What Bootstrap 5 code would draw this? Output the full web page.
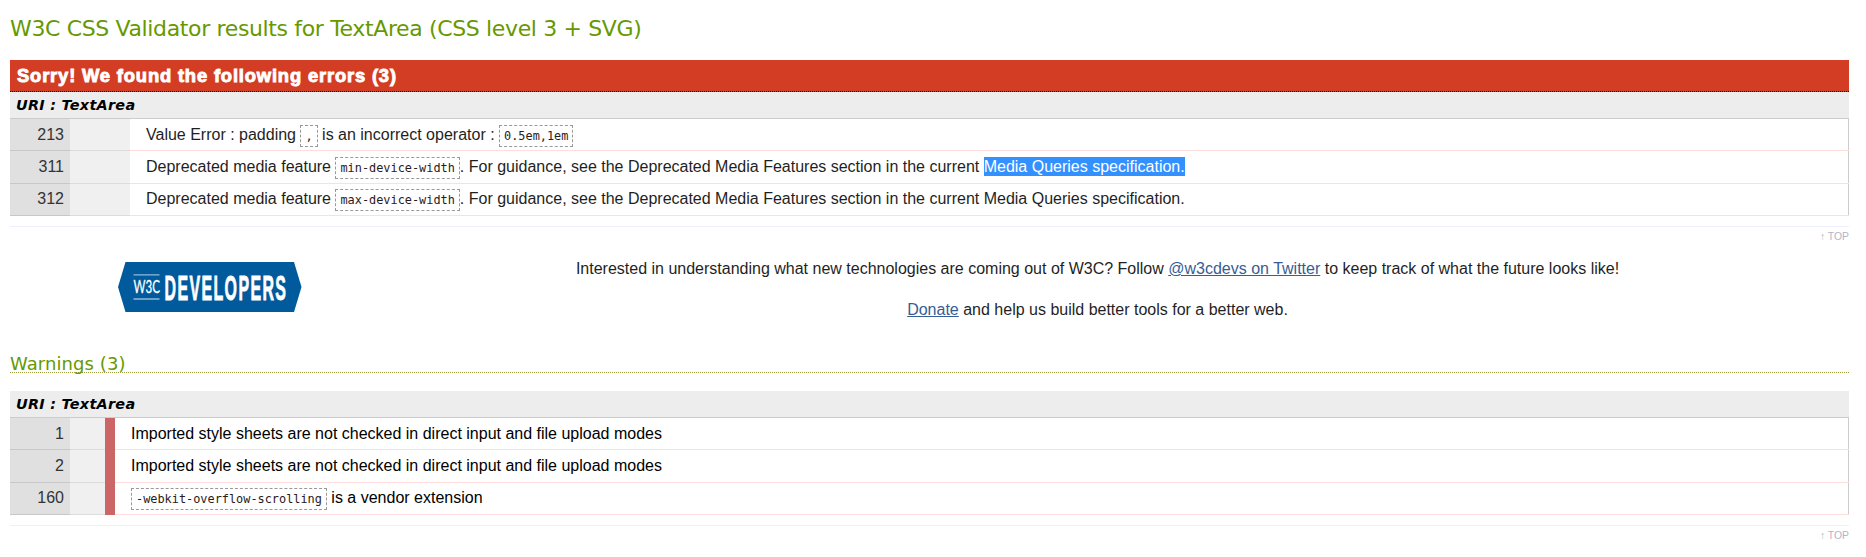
<!DOCTYPE html>
<html lang="en">
<head>
<meta charset="utf-8">
<title>W3C CSS Validator results for TextArea (CSS level 3 + SVG)</title>
<link href="https://cdn.jsdelivr.net/npm/bootstrap@5.3.0/dist/css/bootstrap.min.css" rel="stylesheet">
<style>
body{font:16px/20px "Liberation Sans",Arial,sans-serif;color:#1f1f1f;background:#fff;padding:0 17px 0 10px;overflow:hidden}
h2,h3,h4{font-family:"DejaVu Sans",Verdana,sans-serif;font-weight:400}
.page-title{font-size:22px;line-height:26px;color:#690;padding-top:16px;height:60px;letter-spacing:-.36px}
.err-title{font:bold 18.4px/31px "Liberation Sans",Arial,sans-serif;height:32px;background:#d23d24;color:#fff;padding-left:7px;border-bottom:1px dotted #000;-webkit-text-stroke:.9px #fff;letter-spacing:.82px}
.uri{font:italic bold 14.4px/26px "DejaVu Sans",Verdana,sans-serif;letter-spacing:.28px;background:#ededed;color:#000;height:26px;padding-left:6px}
.results{border-top:1px solid #ccc;border-right:1px solid #ccc}
.entry{height:32.33px;line-height:31px}
.entry:last-child{line-height:29.6px}
.num{width:60px;background:#e0e0e0;border-bottom:1px solid #c8c8c8;padding-right:6px;color:#333}
.lvl{width:60px;background:#f0f0f0;border-bottom:1px solid #ddd}
.msg{border-bottom:1px solid #fdd;padding-left:16px;margin-right:-1px;white-space:pre}
.lvl-warn{width:45px;border-right:10px solid #cc6666;border-bottom:0;box-shadow:inset 0 -1px #ddd}
.warn .msg{color:#000}
code{font:11.88px/20px "DejaVu Sans Mono",monospace;color:#2a1a1a;border:1px dashed #999;padding:3px 4px;background:#fff}
.sel{background:#3390ff;color:#fff;padding:1px 0}
.totop{border-top:1px solid #eef;font-size:10.4px;line-height:20px;color:#b4b4c8;height:21px;margin-top:10px}
.promo{height:108px}
.logo-col{width:336px;padding:15px 0 0 108px}
.promo a{color:#365d95}
.promo-lead{margin:12px 0 21px}
.warn-title{font-size:18px;line-height:18px;color:#690;height:18px;border-bottom:1px dotted #9b9b3f;margin:0 0 18px;letter-spacing:.08px}
</style>
</head>
<body>
<h2 class="page-title m-0">W3C CSS Validator results for TextArea (CSS level 3 + SVG)</h2>
<section>
<h3 class="err-title m-0">Sorry! We found the following errors (3)</h3>
<h4 class="uri m-0">URI : TextArea</h4>
<div class="results">
<div class="entry d-flex"><div class="num text-end">213</div><div class="lvl"></div><div class="msg flex-fill">Value Error : padding <code>,</code> is an incorrect operator : <code>0.5em,1em</code></div></div>
<div class="entry d-flex"><div class="num text-end">311</div><div class="lvl"></div><div class="msg flex-fill">Deprecated media feature <code>min-device-width</code>. For guidance, see the Deprecated Media Features section in the current <span class="sel">Media Queries specification.</span></div></div>
<div class="entry d-flex"><div class="num text-end">312</div><div class="lvl"></div><div class="msg flex-fill">Deprecated media feature <code>max-device-width</code>. For guidance, see the Deprecated Media Features section in the current Media Queries specification.</div></div>
</div>
<div class="totop text-end">↑ TOP</div>
</section>
<section class="promo d-flex">
<div class="logo-col">
<svg class="d-block" width="184" height="50" viewBox="0 0 184 50"><path d="M7.500 0H176L183.500 25 176 50H7.500L0 25Z" fill="#005a9c"/><path d="M15.500 12.800H41.500M15.500 37H41.500" stroke="#8fb9da" stroke-width="1.300"/><text transform="translate(15.500 31) scale(.66 1)" font-family="Lato, sans-serif" font-size="17.500" fill="#fff" stroke="#fff" stroke-width=".3">W3C</text><text transform="translate(46.500 37.500) scale(.455 1)" font-family="Liberation Sans, sans-serif" font-weight="700" font-size="35" fill="#fff" stroke="#fff" stroke-width=".9" textLength="267">DEVELOPERS</text></svg>
</div>
<div class="flex-fill text-center">
<p class="promo-lead">Interested in understanding what new technologies are coming out of W3C? Follow <a href="#">@w3cdevs on Twitter</a> to keep track of what the future looks like!</p>
<p class="m-0"><a href="#">Donate</a> and help us build better tools for a better web.</p>
</div>
</section>
<section class="warn">
<h3 class="warn-title">Warnings (3)</h3>
<h4 class="uri m-0">URI : TextArea</h4>
<div class="results">
<div class="entry d-flex"><div class="num text-end">1</div><div class="lvl lvl-warn"></div><div class="msg flex-fill">Imported style sheets are not checked in direct input and file upload modes</div></div>
<div class="entry d-flex"><div class="num text-end">2</div><div class="lvl lvl-warn"></div><div class="msg flex-fill">Imported style sheets are not checked in direct input and file upload modes</div></div>
<div class="entry d-flex"><div class="num text-end">160</div><div class="lvl lvl-warn"></div><div class="msg flex-fill"><code>-webkit-overflow-scrolling</code> is a vendor extension</div></div>
</div>
<div class="totop text-end">↑ TOP</div>
</section>
<script src="https://cdn.jsdelivr.net/npm/bootstrap@5.3.0/dist/js/bootstrap.bundle.min.js"></script>
</body>
</html>
